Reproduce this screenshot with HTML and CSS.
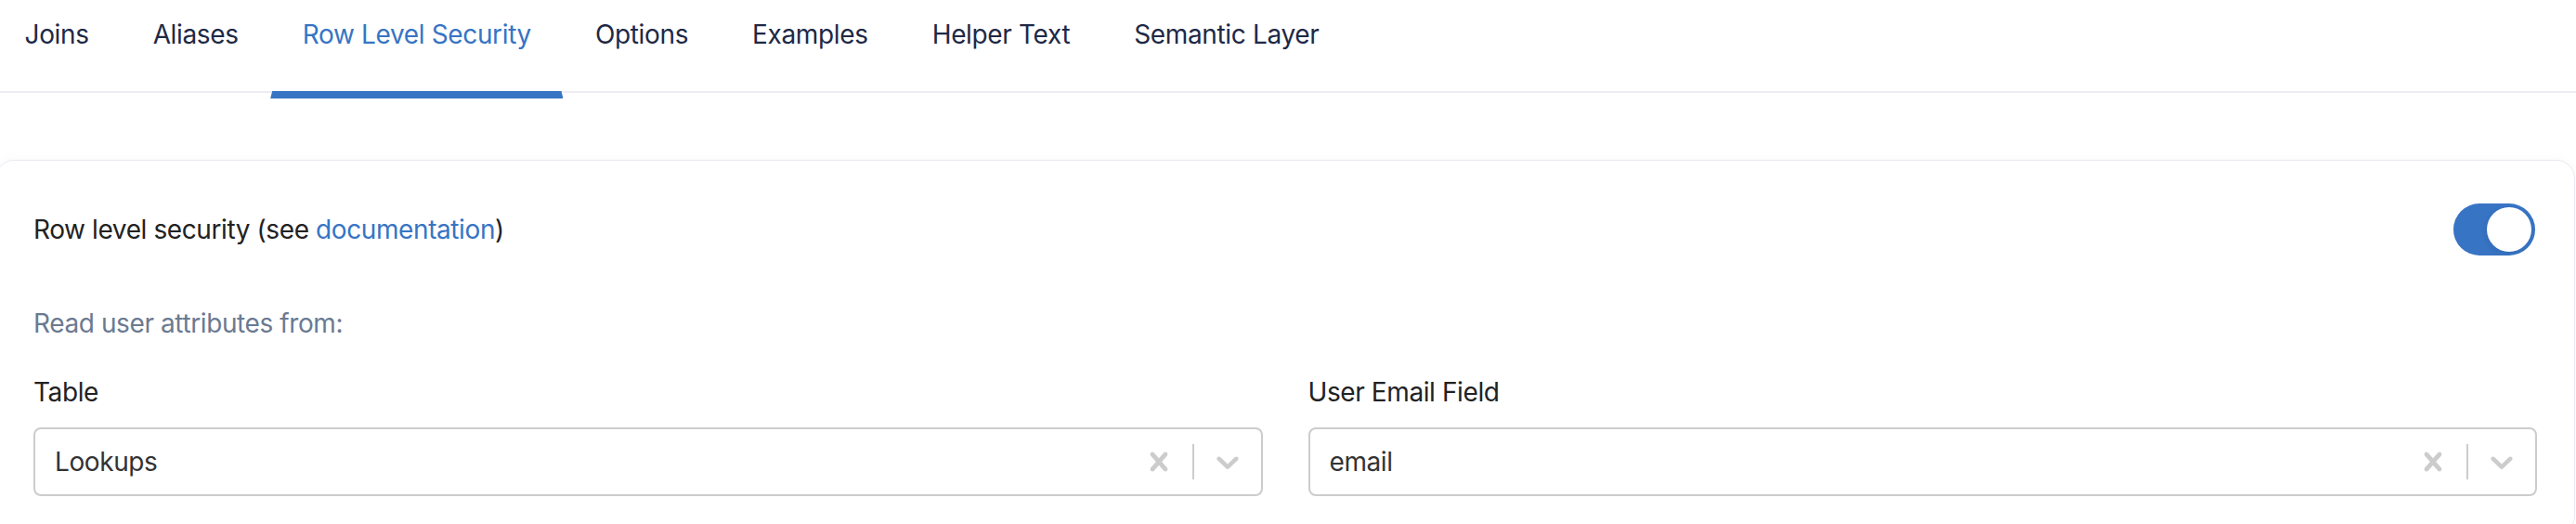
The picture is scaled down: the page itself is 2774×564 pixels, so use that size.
FILE: index.html
```html
<!DOCTYPE html>
<html lang="en">

<head>
    <meta charset="UTF-8">
    <meta name="viewport" content="width=device-width, initial-scale=1.0">
    <title>Row Level Security</title>
    <link rel="stylesheet" href="styles.css">
</head>

<body>
    <nav class="tabs">
        <a class="tab">Joins</a>
        <a class="tab">Aliases</a>
        <a class="tab active">Row Level Security</a>
        <a class="tab">Options</a>
        <a class="tab">Examples</a>
        <a class="tab">Helper Text</a>
        <a class="tab">Semantic Layer</a>
    </nav>

    <section class="card">
        <div class="rls-row">
            <span>Row level security (see <a class="link" href="#">documentation</a>)</span>
            <div class="toggle on"><div class="knob"></div></div>
        </div>

        <p class="hint">Read user attributes from:</p>

        <div class="fields">
            <div class="field">
                <label>Table</label>
                <div class="picker">
                    <div class="value">Lookups</div>
                    <div class="indicator">
                        <svg viewBox="0 0 20 20" width="40" height="40"><path d="M14.348 14.849c-0.469 0.469-1.229 0.469-1.697 0l-2.651-3.030-2.651 3.029c-0.469 0.469-1.229 0.469-1.697 0-0.469-0.469-0.469-1.229 0-1.697l2.758-3.15-2.759-3.152c-0.469-0.469-0.469-1.228 0-1.697s1.228-0.469 1.697 0l2.652 3.031 2.651-3.031c0.469-0.469 1.228-0.469 1.697 0s0.469 1.229 0 1.697l-2.758 3.152 2.758 3.15c0.469 0.469 0.469 1.229 0 1.698z"></path></svg>
                    </div>
                    <span class="sep"></span>
                    <div class="indicator">
                        <svg viewBox="0 0 20 20" width="40" height="40"><path d="M4.516 7.548c0.436-0.446 1.043-0.481 1.576 0l3.908 3.747 3.908-3.747c0.533-0.481 1.141-0.446 1.574 0 0.436 0.445 0.408 1.197 0 1.615-0.406 0.418-4.695 4.502-4.695 4.502-0.217 0.223-0.502 0.335-0.787 0.335s-0.57-0.112-0.789-0.335c0 0-4.287-4.084-4.695-4.502s-0.436-1.17 0-1.615z"></path></svg>
                    </div>
                </div>
            </div>
            <div class="field">
                <label>User Email Field</label>
                <div class="picker">
                    <div class="value">email</div>
                    <div class="indicator">
                        <svg viewBox="0 0 20 20" width="40" height="40"><path d="M14.348 14.849c-0.469 0.469-1.229 0.469-1.697 0l-2.651-3.030-2.651 3.029c-0.469 0.469-1.229 0.469-1.697 0-0.469-0.469-0.469-1.229 0-1.697l2.758-3.15-2.759-3.152c-0.469-0.469-0.469-1.228 0-1.697s1.228-0.469 1.697 0l2.652 3.031 2.651-3.031c0.469-0.469 1.228-0.469 1.697 0s0.469 1.229 0 1.697l-2.758 3.152 2.758 3.15c0.469 0.469 0.469 1.229 0 1.698z"></path></svg>
                    </div>
                    <span class="sep"></span>
                    <div class="indicator">
                        <svg viewBox="0 0 20 20" width="40" height="40"><path d="M4.516 7.548c0.436-0.446 1.043-0.481 1.576 0l3.908 3.747 3.908-3.747c0.533-0.481 1.141-0.446 1.574 0 0.436 0.445 0.408 1.197 0 1.615-0.406 0.418-4.695 4.502-4.695 4.502-0.217 0.223-0.502 0.335-0.787 0.335s-0.57-0.112-0.789-0.335c0 0-4.287-4.084-4.695-4.502s-0.436-1.17 0-1.615z"></path></svg>
                    </div>
                </div>
            </div>
        </div>
    </section>
</body>

</html>
```

FILE: styles.css
```css
body {
    font-family: Inter, "Noto Sans", sans-serif;
    font-size: 28px;
    line-height: 42px;
    letter-spacing: -0.4px;
    margin: 0;
    padding: 0;
    background-color: #fff;
    color: #222;
    overflow: hidden;
}

.tabs {
    display: flex;
    height: 98px;
    margin-left: -8px;
    border-bottom: 2px solid #ececf3;
}

.tab {
    position: relative;
    padding: 16px 34.5px 0 34.5px;
    color: #1e2946;
    letter-spacing: -0.35px;
    cursor: pointer;
    white-space: nowrap;
}

.tab.active {
    color: #3874c4;
}

.tab.active::after {
    content: "";
    position: absolute;
    left: 0;
    right: 0;
    bottom: -8px;
    height: 8px;
    background-color: #3874c4;
    clip-path: polygon(2px 0, calc(100% - 2px) 0, 100% 100%, 0 100%);
}

.card {
    margin: 72px 1px 0 -5px;
    padding: 46px 40px 40px 40px;
    border: 1px solid #e9e9f1;
    border-radius: 20px;
    box-shadow: 0 0 14px rgba(30, 30, 80, 0.03);
}

.rls-row {
    display: flex;
    justify-content: space-between;
    align-items: center;
    height: 56px;
}

.link {
    color: #3874c4;
    text-decoration: none;
}

.toggle {
    width: 88px;
    height: 56px;
    box-sizing: border-box;
    padding: 4px;
    border-radius: 28px;
    background-color: #3874c4;
    display: flex;
    justify-content: flex-end;
    margin-right: 2px;
}

.knob {
    width: 48px;
    height: 48px;
    border-radius: 50%;
    background-color: #fff;
    box-shadow: -2px 2px 6px rgba(0, 0, 0, 0.08);
}

.hint {
    margin: 52px 0 0 0;
    color: #6b7a91;
}

.fields {
    display: grid;
    grid-template-columns: 1fr 1fr;
    gap: 49px;
    margin-top: 32px;
}

.field label {
    display: block;
    margin-bottom: 17px;
    color: #222;
}

.picker {
    display: flex;
    align-items: stretch;
    height: 74px;
    box-sizing: border-box;
    border: 2px solid #cccccc;
    border-radius: 8px;
    background-color: #fff;
}

.value {
    flex: 1;
    display: flex;
    align-items: center;
    padding-left: 21px;
    color: #333;
}

.indicator {
    width: 72px;
    display: flex;
    align-items: center;
    justify-content: center;
}

.indicator svg {
    fill: #cccccc;
}

.sep {
    width: 2px;
    margin: 16px 0;
    background-color: #cccccc;
}
```
